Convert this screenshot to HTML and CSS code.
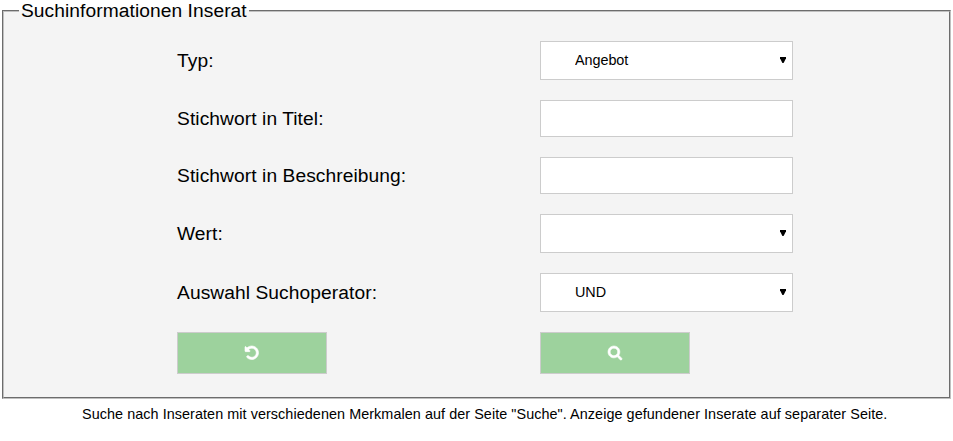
FILE: index.html
```html
<!DOCTYPE html>
<html lang="de">
<head>
<meta charset="utf-8">
<title>Suche</title>
<link rel="stylesheet" href="styles.css">
</head>
<body>
<form>
  <fieldset class="search">
    <legend>Suchinformationen Inserat</legend>
    <div class="fields">
      <label for="typ">Typ:</label>
      <div class="select"><select id="typ"><option>Angebot</option></select><svg class="arrow" viewBox="0 0 6 6"><path d="M0 0h6v1.2L3.6 6H2.4L0 1.2z"/></svg></div>
      <label for="titel">Stichwort in Titel:</label>
      <input id="titel" type="text">
      <label for="text">Stichwort in Beschreibung:</label>
      <input id="text" type="text">
      <label for="wert">Wert:</label>
      <div class="select"><select id="wert"><option></option></select><svg class="arrow" viewBox="0 0 6 6"><path d="M0 0h6v1.2L3.6 6H2.4L0 1.2z"/></svg></div>
      <label for="op">Auswahl Suchoperator:</label>
      <div class="select"><select id="op"><option>UND</option></select><svg class="arrow" viewBox="0 0 6 6"><path d="M0 0h6v1.2L3.6 6H2.4L0 1.2z"/></svg></div>
      <button type="reset"><svg class="icon undo" viewBox="0 0 1536 1536"><path d="M1536 768q0 156-61 298t-164 245-245 164-298 61q-172 0-327-72.500T177 1259q-7-10-6.500-22.500T179 1216l137-138q10-9 25-9 16 2 23 12 73 95 179 147t225 52q104 0 198.500-40.500T1130 1130t109.500-163.500T1280 768t-40.500-198.500T1130 406 966.500 296.500 768 256q-98 0-188 35.500T420 393l137 138q31 30 14 69-17 40-59 40H64q-26 0-45-19T0 576V128q0-42 40-59 39-17 69 14l130 129Q346 111 483.500 55.500T768 0q156 0 298 61t245 164 164 245 61 298z"/></svg></button>
      <button type="submit"><svg class="icon find" viewBox="0 0 1664 1664"><path d="M1152 704q0-185-131.500-316.500T704 256 387.500 387.500 256 704t131.500 316.500T704 1152t316.500-131.500T1152 704zm512 832q0 52-38 90t-90 38q-54 0-90-38l-343-342q-179 124-399 124-143 0-273.500-55.500t-225-150-150-225T0 704t55.500-273.500 150-225 225-150T704 0t273.500 55.500 225 150 150 225T1408 704q0 220-124 399l343 343q37 37 37 90z"/></svg></button>
    </div>
  </fieldset>
</form>
<p class="note">Suche nach Inseraten mit verschiedenen Merkmalen auf der Seite "Suche". Anzeige gefundener Inserate auf separater Seite.</p>
</body>
</html>
```
FILE: styles.css
```css
* { box-sizing: border-box; }
body {
  margin: 0;
  background: #fff;
  color: #000;
  font-family: "Liberation Sans", Arial, sans-serif;
}
.search {
  width: 949px;
  height: 399px;
  margin: 0 2px;
  padding: 20px 0 0 15px;
  border: 2px groove #c0c0c0;
  border-color: #c0c0c0;
  background: #f4f4f4;
}
legend {
  height: 21px;
  padding: 0 2px;
  font-size: 19.2px;
  line-height: 21px;
  letter-spacing: 0.07px;
}
.fields {
  display: grid;
  grid-template-columns: 363px 253px;
  grid-template-rows: 39px 37px 37px 39px 39px 42px;
  row-gap: 20px;
  margin-left: 158px;
  align-items: center;
}
label { font-size: 19.2px; line-height: 22px; letter-spacing: 0.08px; }
.select { position: relative; height: 39px; }
select, input {
  display: block;
  width: 253px;
  height: 100%;
  margin: 0;
  padding: 0 34px 2px;
  border: 1px solid #ccc;
  border-radius: 0;
  background: #fff;
  color: #000;
  font: 14.4px "Liberation Sans", Arial, sans-serif;
  letter-spacing: -0.05px;
  appearance: none;
}
.arrow {
  position: absolute;
  right: 7px;
  top: 16px;
  width: 6px;
  height: 6px;
  pointer-events: none;
}
button {
  display: flex;
  align-items: center;
  justify-content: center;
  width: 150px;
  height: 42px;
  padding: 0;
  border: 1px solid #ccc;
  background: #9dd29d;
}
.icon { fill: #fff; stroke: #fff; stroke-width: 70; overflow: visible; }
.undo { width: 13.5px; height: 13.5px; }
.find { width: 14px; height: 14px; }
.note {
  margin: 6px 0 0 82px;
  font-size: 14.4px;
  line-height: 18px;
  letter-spacing: 0.06px;
  white-space: nowrap;
}
```
